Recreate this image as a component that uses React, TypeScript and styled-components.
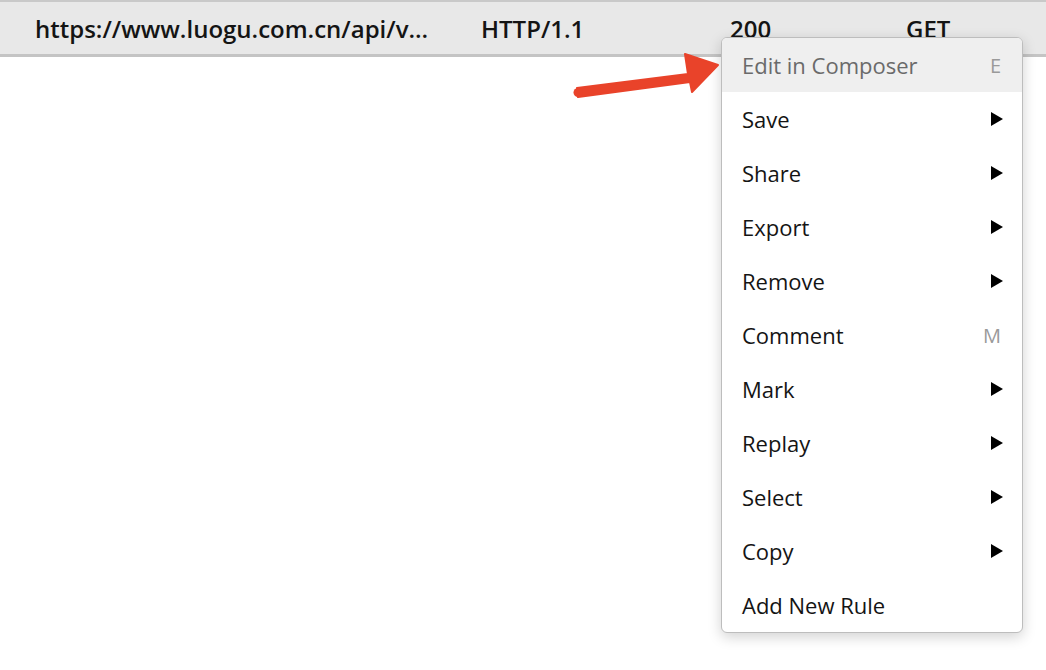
import React from "react";
import styled, { createGlobalStyle } from "styled-components";

const Global = createGlobalStyle`
  html, body { margin: 0; padding: 0; background: #ffffff; }
  body { font-family: "Open Sans", "Noto Sans", sans-serif; }
`;

const Page = styled.div`
  position: relative;
  width: 1046px;
  height: 670px;
  overflow: hidden;
  background: #ffffff;
`;

const Row = styled.div`
  display: grid;
  grid-template-columns: 446px 249px 176px 1fr;
  align-items: center;
  height: 52px;
  padding-left: 35px;
  background: #e8e8e8;
  border-top: 2px solid #c9c9c9;
  border-bottom: 3px solid #c4c4c4;
  font-size: 24px;
  font-weight: 600;
  color: #141414;
  white-space: nowrap;
`;

const Cell = styled.div`
  padding-top: 1px;
`;

const Menu = styled.div`
  position: absolute;
  left: 721px;
  top: 37px;
  width: 300px;
  display: flex;
  flex-direction: column;
  background: #ffffff;
  border: 1px solid #bdbdbd;
  border-radius: 6px;
  box-shadow: 0 4px 14px rgba(0, 0, 0, 0.18);
  overflow: hidden;
`;

const Item = styled.div<{ $active?: boolean }>`
  display: flex;
  align-items: center;
  justify-content: space-between;
  height: 54px;
  padding: 0 18px 0 20px;
  font-size: 22px;
  color: ${(p) => (p.$active ? "#6a6a6a" : "#141414")};
  background: ${(p) => (p.$active ? "#efefef" : "transparent")};
`;

const Shortcut = styled.span`
  color: #9a9a9a;
  font-size: 20px;
  padding-right: 3px;
`;

const Caret = styled.span`
  width: 0;
  height: 0;
  border-top: 7px solid transparent;
  border-bottom: 7px solid transparent;
  border-left: 12px solid #000000;
  margin-right: 1px;
`;

const ArrowSvg = styled.svg`
  position: absolute;
  left: 0;
  top: 0;
  pointer-events: none;
`;

type MenuEntry = { label: string; shortcut?: string; sub?: boolean; active?: boolean };

const entries: MenuEntry[] = [
  { label: "Edit in Composer", shortcut: "E", active: true },
  { label: "Save", sub: true },
  { label: "Share", sub: true },
  { label: "Export", sub: true },
  { label: "Remove", sub: true },
  { label: "Comment", shortcut: "M" },
  { label: "Mark", sub: true },
  { label: "Replay", sub: true },
  { label: "Select", sub: true },
  { label: "Copy", sub: true },
  { label: "Add New Rule" },
];

export default function App() {
  return (
    <Page>
      <Global />
      <Row>
        <Cell>https://www.luogu.com.cn/api/v...</Cell>
        <Cell>HTTP/1.1</Cell>
        <Cell>200</Cell>
        <Cell>GET</Cell>
      </Row>
      <Menu>
        {entries.map((e) => (
          <Item key={e.label} $active={e.active}>
            <span>{e.label}</span>
            {e.shortcut ? <Shortcut>{e.shortcut}</Shortcut> : null}
            {e.sub ? <Caret /> : null}
          </Item>
        ))}
      </Menu>
      <ArrowSvg width="1046" height="670" viewBox="0 0 1046 670">
        <polygon
          points="577,88 688,74 685,54 718,65 692,92 690,82 578,97"
          fill="#e9432a"
          stroke="#e9432a"
          strokeWidth="2"
          strokeLinejoin="round"
        />
        <circle cx="578" cy="92.5" r="4.5" fill="#e9432a" />
      </ArrowSvg>
    </Page>
  );
}
